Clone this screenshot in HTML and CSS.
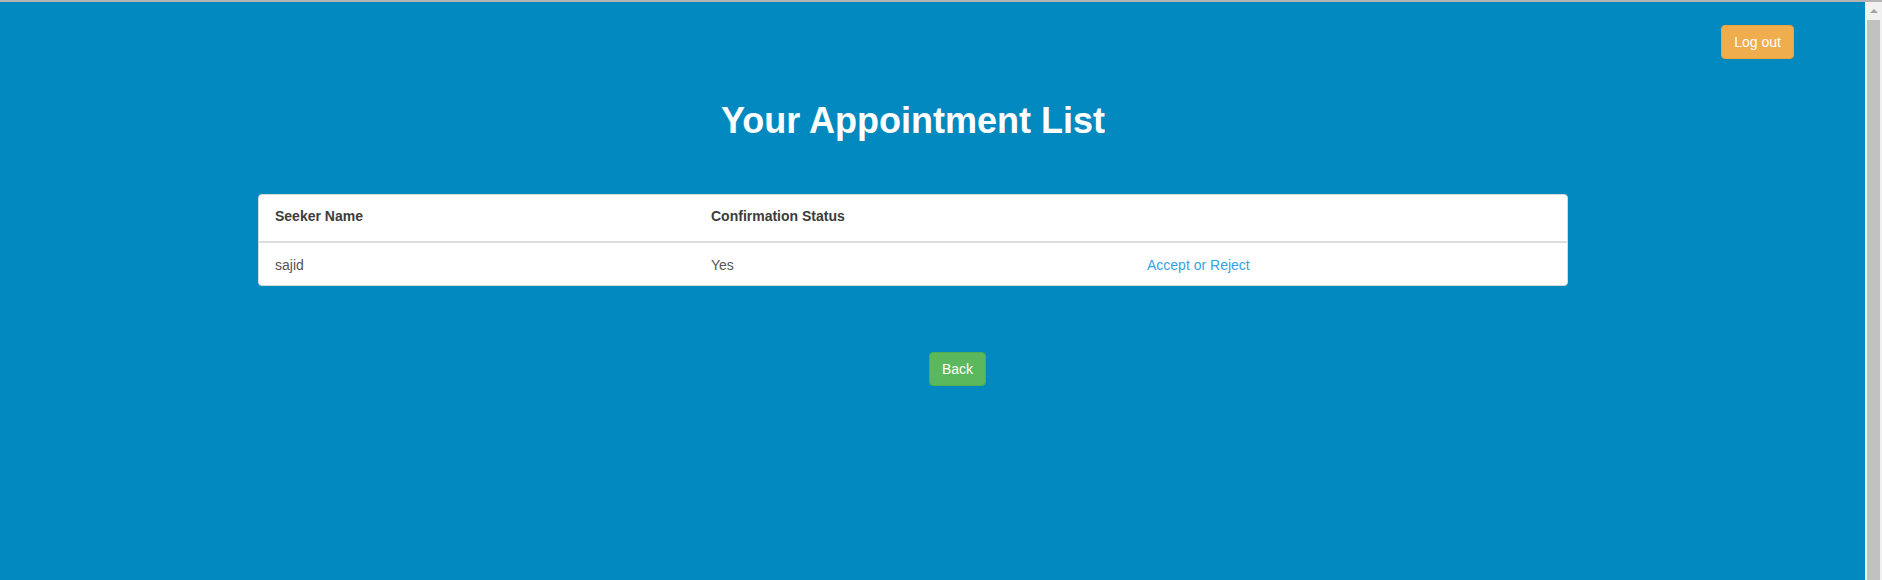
FILE: index.html
```html
<!DOCTYPE html>
<html lang="en">
<head>
<meta charset="utf-8">
<title>Your Appointment List</title>
<link rel="stylesheet" href="styles.css">
</head>
<body>
<div class="window">
  <div class="frame-line"></div>
  <div class="viewport">
    <div class="page">
      <div class="topbar">
        <button class="btn btn-warning" type="button">Log out</button>
      </div>
      <div class="main">
        <h1 class="title">Your Appointment List</h1>
        <div class="panel">
          <table class="table">
            <thead>
              <tr>
                <th>Seeker Name</th>
                <th>Confirmation Status</th>
                <th></th>
              </tr>
            </thead>
            <tbody>
              <tr>
                <td>sajid</td>
                <td>Yes</td>
                <td><a class="link" href="#">Accept or Reject</a></td>
              </tr>
            </tbody>
          </table>
        </div>
        <div class="actions">
          <button class="btn btn-success" type="button">Back</button>
        </div>
      </div>
    </div>
    <div class="scrollbar">
      <div class="scroll-up"><span class="arrow-up"></span></div>
      <div class="scroll-thumb"></div>
    </div>
  </div>
</div>
</body>
</html>
```
FILE: styles.css
```css
html, body {
  margin: 0;
  padding: 0;
  height: 100%;
  overflow: hidden;
}

body {
  font-family: "Liberation Sans", Arial, sans-serif;
  font-size: 14px;
  line-height: 20px;
  color: #555555;
}

.window {
  display: flex;
  flex-direction: column;
  height: 580px;
}

.frame-line {
  height: 2px;
  background: #b4b4b4;
  flex: none;
}

.viewport {
  flex: 1;
  display: flex;
  min-height: 0;
}

.page {
  flex: 1;
  background: #028ac0;
}

.topbar {
  display: flex;
  justify-content: flex-end;
  padding: 23px 71px 0 0;
}

.btn {
  font-family: "Liberation Sans", Arial, sans-serif;
  font-size: 14px;
  line-height: 20px;
  height: 34px;
  padding: 6px 12px;
  border: 1px solid transparent;
  border-radius: 4px;
  color: #ffffff;
  cursor: pointer;
}

.btn-warning {
  background: #f0ad4e;
  border-color: #eea236;
}

.btn-success {
  background: #5cb85c;
  border-color: #4cae4c;
}

.main {
  padding: 0 297px 0 258px;
}

.title {
  margin: 42px 0 0;
  font-size: 36px;
  line-height: 40px;
  font-weight: bold;
  color: #ffffff;
  text-align: center;
}

.panel {
  margin-top: 53px;
  background: #ffffff;
  border: 1px solid #d9d9d9;
  border-radius: 4px;
  overflow: hidden;
}

.table {
  width: 100%;
  border-collapse: collapse;
  table-layout: fixed;
}

.table th {
  text-align: left;
  font-weight: bold;
  color: #3c3c3c;
  padding: 11px 16px 15px;
  border-bottom: 2px solid #dddddd;
}

.table td {
  color: #555555;
  padding: 12px 16px 10px;
}

.link {
  color: #36a3e5;
  text-decoration: none;
}

.actions {
  display: flex;
  padding-left: 671px;
  margin-top: 66px;
}

.scrollbar {
  width: 17px;
  flex: none;
  background: #f1f1f1;
  display: flex;
  flex-direction: column;
  border-left: 1px solid #f7f7f7;
  box-sizing: border-box;
}

.scroll-up {
  height: 18px;
  display: flex;
  align-items: center;
  justify-content: center;
  flex: none;
}

.arrow-up {
  width: 0;
  height: 0;
  border-left: 4px solid transparent;
  border-right: 4px solid transparent;
  border-bottom: 4px solid #a3a3a3;
}

.scroll-thumb {
  flex: 1;
  margin: 0 2px 0 1px;
  background: #c1c1c1;
}
```
